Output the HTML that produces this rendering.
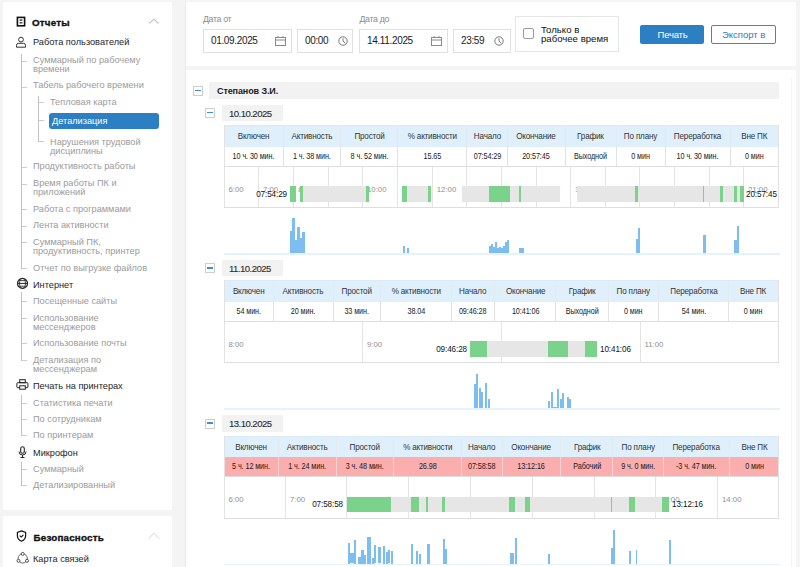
<!DOCTYPE html><html><head><meta charset="utf-8"><style>
*{margin:0;padding:0;box-sizing:border-box}
html,body{width:800px;height:567px;overflow:hidden;background:#f4f4f4;font-family:"Liberation Sans", sans-serif}
.a{position:absolute}
.t{position:absolute;white-space:nowrap;line-height:10px}
.sub{font-size:9.2px;color:#9b9b9b;letter-spacing:0px}
.grp{font-size:9.2px;color:#1e1e1e;letter-spacing:0px}
.ttl{font-size:9.8px;font-weight:bold;color:#111;letter-spacing:0.2px;-webkit-text-stroke:0.35px #111}
.vl{position:absolute;width:1px;background:#c2c2c2}
.hl{position:absolute;height:1px;background:#cdcdcd}
.panel{position:absolute;background:#fff}
</style></head><body>
<div class="panel" style="left:3px;top:2px;width:169px;height:508px"></div>
<div class="panel" style="left:3px;top:516px;width:169px;height:60px"></div>
<div class="t ttl" style="left:32px;top:17.729999999999997px;">Отчеты</div>
<svg class="a" style="left:147px;top:17px" width="14" height="8" viewBox="0 0 14 8"><path d="M2.2 6.5 L6.9 2.2 L11.6 6.5" fill="none" stroke="#c4c4c4" stroke-width="1.1"/></svg>
<svg class="a" style="left:16px;top:16px" width="10" height="11" viewBox="0 0 10 11"><rect x="1.4" y="1.4" width="7.2" height="8.4" fill="none" stroke="#111" stroke-width="1.6"/><rect x="3.6" y="3.5" width="2.8" height="1.2" fill="#111"/><rect x="3.6" y="6.2" width="2.8" height="1.2" fill="#111"/></svg>
<div class="t grp" style="left:33px;top:37.31px;">Работа пользователей</div>
<div class="t sub" style="left:33px;top:54.61px;">Суммарный по рабочему</div>
<div class="t sub" style="left:33px;top:63.81px;">времени</div>
<div class="t sub" style="left:33px;top:80.31px;">Табель рабочего времени</div>
<div class="t sub" style="left:50px;top:96.81px;">Тепловая карта</div>
<div class="t sub" style="left:50px;top:136.81px;">Нарушения трудовой</div>
<div class="t sub" style="left:50px;top:145.81px;">дисциплины</div>
<div class="t sub" style="left:33px;top:161.31px;">Продуктивность работы</div>
<div class="t sub" style="left:33px;top:178.31px;">Время работы ПК и</div>
<div class="t sub" style="left:33px;top:187.31px;">приложений</div>
<div class="t sub" style="left:33px;top:203.81px;">Работа с программами</div>
<div class="t sub" style="left:33px;top:219.81px;">Лента активности</div>
<div class="t sub" style="left:33px;top:236.81px;">Суммарный ПК,</div>
<div class="t sub" style="left:33px;top:245.81px;">продуктивность, принтер</div>
<div class="t sub" style="left:33px;top:262.81px;">Отчет по выгрузке файлов</div>
<div class="t grp" style="left:33px;top:279.81px;">Интернет</div>
<div class="t sub" style="left:33px;top:295.81px;">Посещенные сайты</div>
<div class="t sub" style="left:33px;top:312.81px;">Использование</div>
<div class="t sub" style="left:33px;top:321.81px;">мессенджеров</div>
<div class="t sub" style="left:33px;top:337.81px;">Использование почты</div>
<div class="t sub" style="left:33px;top:354.81px;">Детализация по</div>
<div class="t sub" style="left:33px;top:363.81px;">мессенджерам</div>
<div class="t grp" style="left:33px;top:381.31px;">Печать на принтерах</div>
<div class="t sub" style="left:33px;top:397.81px;">Статистика печати</div>
<div class="t sub" style="left:33px;top:414.31px;">По сотрудникам</div>
<div class="t sub" style="left:33px;top:430.31px;">По принтерам</div>
<div class="t grp" style="left:33px;top:447.81px;">Микрофон</div>
<div class="t sub" style="left:33px;top:464.31px;">Суммарный</div>
<div class="t sub" style="left:33px;top:479.81px;">Детализированный</div>
<div class="t grp" style="left:33px;top:553.81px;">Карта связей</div>
<div class="a" style="left:49px;top:113px;width:110px;height:16px;background:#2b7fc2;border-radius:3px"></div>
<div class="t sub" style="left:52px;top:115.81px;color:#fff">Детализация</div>
<div class="vl" style="left:21px;top:54px;height:215px"></div>
<div class="hl" style="left:22px;top:61px;width:5px"></div>
<div class="hl" style="left:22px;top:87px;width:5px"></div>
<div class="hl" style="left:22px;top:167px;width:5px"></div>
<div class="hl" style="left:22px;top:184px;width:5px"></div>
<div class="hl" style="left:22px;top:209px;width:5px"></div>
<div class="hl" style="left:22px;top:226px;width:5px"></div>
<div class="hl" style="left:22px;top:242px;width:5px"></div>
<div class="hl" style="left:22px;top:268px;width:5px"></div>
<div class="vl" style="left:38px;top:96px;height:46px"></div>
<div class="hl" style="left:39px;top:102px;width:5px"></div>
<div class="hl" style="left:39px;top:120px;width:5px"></div>
<div class="hl" style="left:39px;top:141px;width:5px"></div>
<div class="vl" style="left:21px;top:292px;height:69px"></div>
<div class="hl" style="left:22px;top:301px;width:5px"></div>
<div class="hl" style="left:22px;top:318px;width:5px"></div>
<div class="hl" style="left:22px;top:343px;width:5px"></div>
<div class="hl" style="left:22px;top:360px;width:5px"></div>
<div class="vl" style="left:21px;top:395px;height:41px"></div>
<div class="hl" style="left:22px;top:403px;width:5px"></div>
<div class="hl" style="left:22px;top:419px;width:5px"></div>
<div class="hl" style="left:22px;top:435px;width:5px"></div>
<div class="vl" style="left:21px;top:462px;height:24px"></div>
<div class="hl" style="left:22px;top:469px;width:5px"></div>
<div class="hl" style="left:22px;top:485px;width:5px"></div>
<svg class="a" style="left:15px;top:36px" width="12" height="12" viewBox="0 0 12 12"><circle cx="6" cy="3.6" r="2.4" fill="none" stroke="#333" stroke-width="1"/><path d="M1.5 11.2 V9.3 Q1.5 7.3 3.5 7.3 H8.5 Q10.5 7.3 10.5 9.3 V11.2 Z" fill="none" stroke="#333" stroke-width="1"/></svg>
<svg class="a" style="left:16px;top:277px" width="14" height="14" viewBox="0 0 14 14"><circle cx="6.5" cy="6.4" r="5" fill="none" stroke="#222" stroke-width="1.2"/><ellipse cx="6.5" cy="6.4" rx="3" ry="5" fill="none" stroke="#333" stroke-width="0.9"/><path d="M1.5 6.4 H11.5" stroke="#222" stroke-width="1"/><path d="M2.5 3.6 H10.5 M2.5 9.2 H10.5" stroke="#333" stroke-width="0.9"/></svg>
<svg class="a" style="left:16px;top:378px" width="13" height="13" viewBox="0 0 13 13"><rect x="3.7" y="1.7" width="5.6" height="3" fill="none" stroke="#222" stroke-width="1"/><rect x="0.9" y="4.7" width="11" height="5" rx="0.8" fill="none" stroke="#222" stroke-width="1"/><rect x="3.7" y="7.8" width="5.6" height="3.4" fill="#fff" stroke="#222" stroke-width="1"/></svg>
<svg class="a" style="left:18px;top:446px" width="9" height="12" viewBox="0 0 9 12"><rect x="2.7" y="0.8" width="3.6" height="6.4" rx="1.8" fill="none" stroke="#222" stroke-width="1.1"/><path d="M1 5.5 Q1 9 4.5 9 Q8 9 8 5.5 M4.5 9 V11.5 M2.5 11.5 H6.5" fill="none" stroke="#222" stroke-width="1"/></svg>
<div class="t ttl" style="left:33.5px;top:532.53px;">Безопасность</div>
<svg class="a" style="left:147px;top:531px" width="14" height="9" viewBox="0 0 14 9"><path d="M1.5 7.8 L6.9 2.2 L12.3 7.8" fill="none" stroke="#d4d4d4" stroke-width="1"/></svg>
<svg class="a" style="left:16px;top:530px" width="11" height="12" viewBox="0 0 11 12"><path d="M5.5 0.9 L9.6 2.4 V5.8 Q9.6 9.6 5.5 11.2 Q1.4 9.6 1.4 5.8 V2.4 Z" fill="none" stroke="#111" stroke-width="1.2"/><path d="M3.7 5.7 L5.2 7.1 L7.4 4.8" fill="none" stroke="#111" stroke-width="1.1"/></svg>
<svg class="a" style="left:16px;top:551px" width="14" height="14" viewBox="0 0 14 14"><circle cx="6.7" cy="7.4" r="4.6" fill="none" stroke="#555" stroke-width="0.9"/><circle cx="6.7" cy="2.9" r="1.5" fill="#fff" stroke="#444" stroke-width="0.9"/><circle cx="2.5" cy="9.8" r="1.5" fill="#fff" stroke="#444" stroke-width="0.9"/><circle cx="11" cy="9.8" r="1.5" fill="#fff" stroke="#444" stroke-width="0.9"/></svg>
<div class="a" style="left:185px;top:0px;width:1px;height:567px;background:#ebebeb"></div>
<div class="panel" style="left:186px;top:2px;width:610px;height:64px"></div>
<div class="panel" style="left:186px;top:70px;width:610px;height:500px"></div>
<div class="a" style="left:791px;top:78px;width:1px;height:500px;background:#f4f4f4"></div>
<div class="t" style="left:203px;top:14.95px;font-size:8.8px;line-height:8.8px;color:#8c8c8c;letter-spacing:-0.35px">Дата от</div>
<div class="t" style="left:359.5px;top:14.95px;font-size:8.8px;line-height:8.8px;color:#8c8c8c;letter-spacing:-0.35px">Дата до</div>
<div class="a" style="left:203px;top:29px;width:89px;height:24px;border:1px solid #e0e0e0;background:#fff"></div>
<div class="t" style="left:211px;top:35.53px;font-size:10px;line-height:10px;color:#1a1a1a;letter-spacing:-0.35px">01.09.2025</div>
<svg class="a" style="left:275px;top:36px" width="11" height="10" viewBox="0 0 11 10"><rect x="0.5" y="1.5" width="10" height="8" fill="none" stroke="#8a8a8a" stroke-width="1"/><path d="M0.5 4 H10.5 M3 0 V2 M8 0 V2" stroke="#8a8a8a" stroke-width="1"/></svg>
<div class="a" style="left:297px;top:29px;width:56px;height:24px;border:1px solid #e0e0e0;background:#fff"></div>
<div class="t" style="left:305px;top:35.53px;font-size:10px;line-height:10px;color:#1a1a1a;letter-spacing:-0.35px">00:00</div>
<svg class="a" style="left:337.8px;top:36px" width="10" height="10" viewBox="0 0 10 10"><circle cx="5" cy="5" r="4.2" fill="none" stroke="#7a7a7a" stroke-width="1"/><path d="M5 2.3 V5 L7 7" fill="none" stroke="#7a7a7a" stroke-width="1"/></svg>
<div class="a" style="left:359px;top:29px;width:89px;height:24px;border:1px solid #e0e0e0;background:#fff"></div>
<div class="t" style="left:367px;top:35.53px;font-size:10px;line-height:10px;color:#1a1a1a;letter-spacing:-0.35px">14.11.2025</div>
<svg class="a" style="left:431px;top:36px" width="11" height="10" viewBox="0 0 11 10"><rect x="0.5" y="1.5" width="10" height="8" fill="none" stroke="#8a8a8a" stroke-width="1"/><path d="M0.5 4 H10.5 M3 0 V2 M8 0 V2" stroke="#8a8a8a" stroke-width="1"/></svg>
<div class="a" style="left:453px;top:29px;width:58px;height:24px;border:1px solid #e0e0e0;background:#fff"></div>
<div class="t" style="left:461px;top:35.53px;font-size:10px;line-height:10px;color:#1a1a1a;letter-spacing:-0.35px">23:59</div>
<svg class="a" style="left:493.8px;top:36px" width="10" height="10" viewBox="0 0 10 10"><circle cx="5" cy="5" r="4.2" fill="none" stroke="#7a7a7a" stroke-width="1"/><path d="M5 2.3 V5 L7 7" fill="none" stroke="#7a7a7a" stroke-width="1"/></svg>
<div class="a" style="left:515px;top:16px;width:104px;height:36px;border:1px solid #e6e6e6"></div>
<div class="a" style="left:523px;top:28px;width:11px;height:11px;border:1px solid #9a9a9a;border-radius:2px"></div>
<div class="t" style="left:541px;top:25.07px;font-size:9.6px;line-height:9.6px;color:#111;letter-spacing:0px">Только в</div>
<div class="t" style="left:541px;top:34.17px;font-size:9.6px;line-height:9.6px;color:#111;letter-spacing:0px">рабочее время</div>
<div class="a" style="left:640px;top:25px;width:64px;height:18.5px;background:#2c7fc2;border-radius:2px"></div>
<div class="t" style="left:657.5px;top:29.76px;font-size:9.5px;line-height:9.5px;color:#fff;letter-spacing:-0.2px">Печать</div>
<div class="a" style="left:711px;top:25px;width:65px;height:18.5px;border:1px solid #3b87c7;border-radius:2px;background:#fff"></div>
<div class="t" style="left:722px;top:29.76px;font-size:9.5px;line-height:9.5px;color:#3478bd;letter-spacing:0px">Экспорт в</div>
<div class="a" style="left:193px;top:86px;width:10px;height:10px;border:1px solid #cdcdcd;background:#fff"></div>
<div class="a" style="left:195px;top:89.7px;width:5.5px;height:1.8px;background:#3f8fd2"></div>
<div class="a" style="left:209px;top:82px;width:570px;height:17px;background:#f2f2f2"></div>
<div class="t" style="left:217px;top:87.38px;font-size:9px;line-height:9px;color:#1a1a1a;font-weight:bold;letter-spacing:-0.1px">Степанов З.И.</div>
<div class="a" style="left:205px;top:108px;width:10px;height:10px;border:1px solid #cdcdcd;background:#fff"></div>
<div class="a" style="left:207px;top:111.7px;width:5.5px;height:1.8px;background:#3f8fd2"></div>
<div class="a" style="left:222px;top:104.5px;width:61px;height:16.5px;background:#f2f2f2"></div>
<div class="t" style="left:229px;top:108.77px;font-size:9.6px;line-height:9.6px;color:#2a2a2a;letter-spacing:-0.55px;-webkit-text-stroke:0.1px #2a2a2a">10.10.2025</div>
<div class="a" style="left:224px;top:125px;width:554.5px;height:21.5px;background:#dff0fc;border-top:1px solid #dbeaf5"></div>
<div class="a" style="left:224px;top:146.5px;width:554.5px;height:20px;background:#fff;border-bottom:1px solid #dedede"></div>
<div class="a" style="left:224px;top:125px;width:1px;height:82.0px;background:#e2e2e2"></div>
<div class="a" style="left:777.5px;top:125px;width:1px;height:82.0px;background:#e2e2e2"></div>
<div class="a" style="left:282.5px;top:125px;width:1px;height:21.5px;background:#e4ebf0"></div>
<div class="a" style="left:282.5px;top:146.5px;width:1px;height:19px;background:#e2e2e2"></div>
<div class="a" style="left:340.25px;top:125px;width:1px;height:21.5px;background:#e4ebf0"></div>
<div class="a" style="left:340.25px;top:146.5px;width:1px;height:19px;background:#e2e2e2"></div>
<div class="a" style="left:397.3px;top:125px;width:1px;height:21.5px;background:#e4ebf0"></div>
<div class="a" style="left:397.3px;top:146.5px;width:1px;height:19px;background:#e2e2e2"></div>
<div class="a" style="left:466.0px;top:125px;width:1px;height:21.5px;background:#e4ebf0"></div>
<div class="a" style="left:466.0px;top:146.5px;width:1px;height:19px;background:#e2e2e2"></div>
<div class="a" style="left:506.9px;top:125px;width:1px;height:21.5px;background:#e4ebf0"></div>
<div class="a" style="left:506.9px;top:146.5px;width:1px;height:19px;background:#e2e2e2"></div>
<div class="a" style="left:564.7px;top:125px;width:1px;height:21.5px;background:#e4ebf0"></div>
<div class="a" style="left:564.7px;top:146.5px;width:1px;height:19px;background:#e2e2e2"></div>
<div class="a" style="left:615.5px;top:125px;width:1px;height:21.5px;background:#e4ebf0"></div>
<div class="a" style="left:615.5px;top:146.5px;width:1px;height:19px;background:#e2e2e2"></div>
<div class="a" style="left:664.5px;top:125px;width:1px;height:21.5px;background:#e4ebf0"></div>
<div class="a" style="left:664.5px;top:146.5px;width:1px;height:19px;background:#e2e2e2"></div>
<div class="a" style="left:729.5px;top:125px;width:1px;height:21.5px;background:#e4ebf0"></div>
<div class="a" style="left:729.5px;top:146.5px;width:1px;height:19px;background:#e2e2e2"></div>
<div class="t" style="left:224px;width:59px;text-align:center;top:132.1px;font-size:9px;line-height:9px;color:#333;letter-spacing:-0.2px;transform:scaleX(0.9)">Включен</div>
<div class="t" style="left:224px;width:59px;text-align:center;top:151.7px;font-size:8.6px;line-height:9px;color:#1a1a1a;letter-spacing:-0.1px;transform:scaleX(0.84)">10 ч. 30 мин.</div>
<div class="t" style="left:283px;width:57.75px;text-align:center;top:132.1px;font-size:9px;line-height:9px;color:#333;letter-spacing:-0.2px;transform:scaleX(0.9)">Активность</div>
<div class="t" style="left:283px;width:57.75px;text-align:center;top:151.7px;font-size:8.6px;line-height:9px;color:#1a1a1a;letter-spacing:-0.1px;transform:scaleX(0.84)">1 ч. 38 мин.</div>
<div class="t" style="left:340.75px;width:57.05000000000001px;text-align:center;top:132.1px;font-size:9px;line-height:9px;color:#333;letter-spacing:-0.2px;transform:scaleX(0.9)">Простой</div>
<div class="t" style="left:340.75px;width:57.05000000000001px;text-align:center;top:151.7px;font-size:8.6px;line-height:9px;color:#1a1a1a;letter-spacing:-0.1px;transform:scaleX(0.84)">8 ч. 52 мин.</div>
<div class="t" style="left:397.8px;width:68.69999999999999px;text-align:center;top:132.1px;font-size:9px;line-height:9px;color:#333;letter-spacing:-0.2px;transform:scaleX(0.9)">% активности</div>
<div class="t" style="left:397.8px;width:68.69999999999999px;text-align:center;top:151.7px;font-size:8.6px;line-height:9px;color:#1a1a1a;letter-spacing:-0.1px;transform:scaleX(0.84)">15.65</div>
<div class="t" style="left:466.5px;width:40.89999999999998px;text-align:center;top:132.1px;font-size:9px;line-height:9px;color:#333;letter-spacing:-0.2px;transform:scaleX(0.9)">Начало</div>
<div class="t" style="left:466.5px;width:40.89999999999998px;text-align:center;top:151.7px;font-size:8.6px;line-height:9px;color:#1a1a1a;letter-spacing:-0.1px;transform:scaleX(0.84)">07:54:29</div>
<div class="t" style="left:507.4px;width:57.80000000000007px;text-align:center;top:132.1px;font-size:9px;line-height:9px;color:#333;letter-spacing:-0.2px;transform:scaleX(0.9)">Окончание</div>
<div class="t" style="left:507.4px;width:57.80000000000007px;text-align:center;top:151.7px;font-size:8.6px;line-height:9px;color:#1a1a1a;letter-spacing:-0.1px;transform:scaleX(0.84)">20:57:45</div>
<div class="t" style="left:565.2px;width:50.799999999999955px;text-align:center;top:132.1px;font-size:9px;line-height:9px;color:#333;letter-spacing:-0.2px;transform:scaleX(0.9)">График</div>
<div class="t" style="left:565.2px;width:50.799999999999955px;text-align:center;top:151.7px;font-size:8.6px;line-height:9px;color:#1a1a1a;letter-spacing:-0.1px;transform:scaleX(0.84)">Выходной</div>
<div class="t" style="left:616px;width:49px;text-align:center;top:132.1px;font-size:9px;line-height:9px;color:#333;letter-spacing:-0.2px;transform:scaleX(0.9)">По плану</div>
<div class="t" style="left:616px;width:49px;text-align:center;top:151.7px;font-size:8.6px;line-height:9px;color:#1a1a1a;letter-spacing:-0.1px;transform:scaleX(0.84)">0 мин</div>
<div class="t" style="left:665px;width:65px;text-align:center;top:132.1px;font-size:9px;line-height:9px;color:#333;letter-spacing:-0.2px;transform:scaleX(0.9)">Переработка</div>
<div class="t" style="left:665px;width:65px;text-align:center;top:151.7px;font-size:8.6px;line-height:9px;color:#1a1a1a;letter-spacing:-0.1px;transform:scaleX(0.84)">10 ч. 30 мин.</div>
<div class="t" style="left:730px;width:48.5px;text-align:center;top:132.1px;font-size:9px;line-height:9px;color:#333;letter-spacing:-0.2px;transform:scaleX(0.9)">Вне ПК</div>
<div class="t" style="left:730px;width:48.5px;text-align:center;top:151.7px;font-size:8.6px;line-height:9px;color:#1a1a1a;letter-spacing:-0.1px;transform:scaleX(0.84)">0 мин</div>
<div class="a" style="left:224px;top:207.0px;width:554.5px;height:1px;background:#dedede"></div>
<div class="a" style="left:258.00px;top:166.5px;width:1px;height:40.5px;background:#e4e4e4"></div>
<div class="a" style="left:293.25px;top:166.5px;width:1px;height:40.5px;background:#e4e4e4"></div>
<div class="a" style="left:328.00px;top:166.5px;width:1px;height:40.5px;background:#e4e4e4"></div>
<div class="a" style="left:362.00px;top:166.5px;width:1px;height:40.5px;background:#e4e4e4"></div>
<div class="a" style="left:396.75px;top:166.5px;width:1px;height:40.5px;background:#e4e4e4"></div>
<div class="a" style="left:431.75px;top:166.5px;width:1px;height:40.5px;background:#e4e4e4"></div>
<div class="a" style="left:465.75px;top:166.5px;width:1px;height:40.5px;background:#e4e4e4"></div>
<div class="a" style="left:501.00px;top:166.5px;width:1px;height:40.5px;background:#e4e4e4"></div>
<div class="a" style="left:535.50px;top:166.5px;width:1px;height:40.5px;background:#e4e4e4"></div>
<div class="a" style="left:569.90px;top:166.5px;width:1px;height:40.5px;background:#e4e4e4"></div>
<div class="a" style="left:604.90px;top:166.5px;width:1px;height:40.5px;background:#e4e4e4"></div>
<div class="a" style="left:638.90px;top:166.5px;width:1px;height:40.5px;background:#e4e4e4"></div>
<div class="a" style="left:674.10px;top:166.5px;width:1px;height:40.5px;background:#e4e4e4"></div>
<div class="a" style="left:708.90px;top:166.5px;width:1px;height:40.5px;background:#e4e4e4"></div>
<div class="a" style="left:743.00px;top:166.5px;width:1px;height:40.5px;background:#e4e4e4"></div>
<div class="t" style="left:228.50px;top:185.5px;font-size:7.8px;line-height:7px;color:#8f8f8f">6:00</div>
<div class="t" style="left:263.00px;top:185.5px;font-size:7.8px;line-height:7px;color:#8f8f8f">7:00</div>
<div class="t" style="left:298.25px;top:185.5px;font-size:7.8px;line-height:7px;color:#8f8f8f">8:00</div>
<div class="t" style="left:333.00px;top:185.5px;font-size:7.8px;line-height:7px;color:#8f8f8f">9:00</div>
<div class="t" style="left:367.00px;top:185.5px;font-size:7.8px;line-height:7px;color:#8f8f8f">10:00</div>
<div class="t" style="left:401.75px;top:185.5px;font-size:7.8px;line-height:7px;color:#8f8f8f">11:00</div>
<div class="t" style="left:436.75px;top:185.5px;font-size:7.8px;line-height:7px;color:#8f8f8f">12:00</div>
<div class="t" style="left:470.75px;top:185.5px;font-size:7.8px;line-height:7px;color:#8f8f8f">13:00</div>
<div class="t" style="left:506.00px;top:185.5px;font-size:7.8px;line-height:7px;color:#8f8f8f">14:00</div>
<div class="t" style="left:540.50px;top:185.5px;font-size:7.8px;line-height:7px;color:#8f8f8f">15:00</div>
<div class="t" style="left:574.90px;top:185.5px;font-size:7.8px;line-height:7px;color:#8f8f8f">16:00</div>
<div class="t" style="left:609.90px;top:185.5px;font-size:7.8px;line-height:7px;color:#8f8f8f">17:00</div>
<div class="t" style="left:643.90px;top:185.5px;font-size:7.8px;line-height:7px;color:#8f8f8f">18:00</div>
<div class="t" style="left:679.10px;top:185.5px;font-size:7.8px;line-height:7px;color:#8f8f8f">19:00</div>
<div class="t" style="left:713.90px;top:185.5px;font-size:7.8px;line-height:7px;color:#8f8f8f">20:00</div>
<div class="t" style="left:748.00px;top:185.5px;font-size:7.8px;line-height:7px;color:#8f8f8f">21:00</div>
<div class="a" style="left:302.75px;top:186.0px;width:63.25px;height:15.5px;background:#e6e6e6"></div>
<div class="a" style="left:407px;top:186.0px;width:21px;height:15.5px;background:#e6e6e6"></div>
<div class="a" style="left:462.1px;top:186.0px;width:27.299999999999955px;height:15.5px;background:#e6e6e6"></div>
<div class="a" style="left:509.75px;top:186.0px;width:50.0px;height:15.5px;background:#e6e6e6"></div>
<div class="a" style="left:577.25px;top:186.0px;width:166.25px;height:15.5px;background:#e6e6e6"></div>
<div class="a" style="left:290px;top:186.0px;width:6.25px;height:15.5px;background:#7bd38b"></div>
<div class="a" style="left:300.25px;top:186.0px;width:2.5px;height:15.5px;background:#7bd38b"></div>
<div class="a" style="left:366px;top:186.0px;width:3px;height:15.5px;background:#7bd38b"></div>
<div class="a" style="left:402px;top:186.0px;width:5px;height:15.5px;background:#7bd38b"></div>
<div class="a" style="left:428px;top:186.0px;width:3.3999999999999773px;height:15.5px;background:#7bd38b"></div>
<div class="a" style="left:489.4px;top:186.0px;width:20.350000000000023px;height:15.5px;background:#7bd38b"></div>
<div class="a" style="left:519.4px;top:186.0px;width:1.6000000000000227px;height:15.5px;background:#7bd38b"></div>
<div class="a" style="left:635px;top:186.0px;width:2.8999999999999773px;height:15.5px;background:#7bd38b"></div>
<div class="a" style="left:703.1px;top:186.0px;width:1.0px;height:15.5px;background:#7bd38b"></div>
<div class="a" style="left:720px;top:186.0px;width:3.1000000000000227px;height:15.5px;background:#7bd38b"></div>
<div class="a" style="left:733.75px;top:186.0px;width:3.1499999999999773px;height:15.5px;background:#7bd38b"></div>
<div class="a" style="left:740.25px;top:186.0px;width:3.25px;height:15.5px;background:#7bd38b"></div>
<div class="t" style="left:246.5px;width:40px;text-align:right;top:189.5px;font-size:9px;line-height:9px;color:#111;letter-spacing:-0.1px;transform:scaleX(0.9);transform-origin:100% 50%">07:54:29</div>
<div class="t" style="left:746px;top:189.5px;font-size:9px;line-height:9px;color:#111;letter-spacing:-0.1px;transform:scaleX(0.9);transform-origin:0 50%">20:57:45</div>
<div class="a" style="left:224px;top:253.0px;width:555.5px;height:1.5px;background:#e6f2fc"></div>
<div class="a" style="left:290px;top:231px;width:2.00px;height:22.0px;background:#7dbdf0"></div>
<div class="a" style="left:292px;top:218.2px;width:2.50px;height:34.80000000000001px;background:#7dbdf0"></div>
<div class="a" style="left:295px;top:240px;width:2.00px;height:13.0px;background:#7dbdf0"></div>
<div class="a" style="left:297px;top:226.8px;width:2.50px;height:26.19999999999999px;background:#7dbdf0"></div>
<div class="a" style="left:300px;top:238px;width:2.00px;height:15.0px;background:#7dbdf0"></div>
<div class="a" style="left:302px;top:232px;width:2.50px;height:21.0px;background:#7dbdf0"></div>
<div class="a" style="left:402.8px;top:246.4px;width:2.40px;height:6.599999999999994px;background:#7dbdf0"></div>
<div class="a" style="left:407px;top:248px;width:2.00px;height:5.0px;background:#7dbdf0"></div>
<div class="a" style="left:489px;top:245.75px;width:2.00px;height:7.25px;background:#7dbdf0"></div>
<div class="a" style="left:491px;top:243.5px;width:2.00px;height:9.5px;background:#7dbdf0"></div>
<div class="a" style="left:493px;top:246.6px;width:2.00px;height:6.400000000000006px;background:#7dbdf0"></div>
<div class="a" style="left:495px;top:241.9px;width:2.00px;height:11.099999999999994px;background:#7dbdf0"></div>
<div class="a" style="left:497px;top:248px;width:1.60px;height:5.0px;background:#7dbdf0"></div>
<div class="a" style="left:498.5px;top:246.85px;width:2.00px;height:6.150000000000006px;background:#7dbdf0"></div>
<div class="a" style="left:501px;top:248.2px;width:2.00px;height:4.800000000000011px;background:#7dbdf0"></div>
<div class="a" style="left:503px;top:246px;width:2.00px;height:7.0px;background:#7dbdf0"></div>
<div class="a" style="left:505px;top:241.9px;width:1.60px;height:11.099999999999994px;background:#7dbdf0"></div>
<div class="a" style="left:506.5px;top:240.25px;width:2.50px;height:12.75px;background:#7dbdf0"></div>
<div class="a" style="left:519px;top:248px;width:4.50px;height:5.0px;background:#7dbdf0"></div>
<div class="a" style="left:636px;top:239px;width:2.00px;height:14.0px;background:#7dbdf0"></div>
<div class="a" style="left:638px;top:227.6px;width:2.00px;height:25.400000000000006px;background:#7dbdf0"></div>
<div class="a" style="left:703px;top:235.4px;width:2.50px;height:17.599999999999994px;background:#7dbdf0"></div>
<div class="a" style="left:734px;top:240px;width:2.50px;height:13.0px;background:#7dbdf0"></div>
<div class="a" style="left:737px;top:226px;width:2.00px;height:27.0px;background:#7dbdf0"></div>
<div class="a" style="left:205px;top:263.25px;width:10px;height:10px;border:1px solid #cdcdcd;background:#fff"></div>
<div class="a" style="left:207px;top:266.95px;width:5.5px;height:1.8px;background:#3f8fd2"></div>
<div class="a" style="left:222px;top:259.75px;width:61px;height:16.5px;background:#f2f2f2"></div>
<div class="t" style="left:229px;top:264.02px;font-size:9.6px;line-height:9.6px;color:#2a2a2a;letter-spacing:-0.55px;-webkit-text-stroke:0.1px #2a2a2a">11.10.2025</div>
<div class="a" style="left:224px;top:280.25px;width:554.5px;height:21.5px;background:#dff0fc;border-top:1px solid #dbeaf5"></div>
<div class="a" style="left:224px;top:301.75px;width:554.5px;height:20px;background:#fff;border-bottom:1px solid #dedede"></div>
<div class="a" style="left:224px;top:280.25px;width:1px;height:82.0px;background:#e2e2e2"></div>
<div class="a" style="left:777.5px;top:280.25px;width:1px;height:82.0px;background:#e2e2e2"></div>
<div class="a" style="left:272.9px;top:280.25px;width:1px;height:21.5px;background:#e4ebf0"></div>
<div class="a" style="left:272.9px;top:301.75px;width:1px;height:19px;background:#e2e2e2"></div>
<div class="a" style="left:332.9px;top:280.25px;width:1px;height:21.5px;background:#e4ebf0"></div>
<div class="a" style="left:332.9px;top:301.75px;width:1px;height:19px;background:#e2e2e2"></div>
<div class="a" style="left:380.2px;top:280.25px;width:1px;height:21.5px;background:#e4ebf0"></div>
<div class="a" style="left:380.2px;top:301.75px;width:1px;height:19px;background:#e2e2e2"></div>
<div class="a" style="left:450.8px;top:280.25px;width:1px;height:21.5px;background:#e4ebf0"></div>
<div class="a" style="left:450.8px;top:301.75px;width:1px;height:19px;background:#e2e2e2"></div>
<div class="a" style="left:494.1px;top:280.25px;width:1px;height:21.5px;background:#e4ebf0"></div>
<div class="a" style="left:494.1px;top:301.75px;width:1px;height:19px;background:#e2e2e2"></div>
<div class="a" style="left:555.4px;top:280.25px;width:1px;height:21.5px;background:#e4ebf0"></div>
<div class="a" style="left:555.4px;top:301.75px;width:1px;height:19px;background:#e2e2e2"></div>
<div class="a" style="left:607.7px;top:280.25px;width:1px;height:21.5px;background:#e4ebf0"></div>
<div class="a" style="left:607.7px;top:301.75px;width:1px;height:19px;background:#e2e2e2"></div>
<div class="a" style="left:658.1px;top:280.25px;width:1px;height:21.5px;background:#e4ebf0"></div>
<div class="a" style="left:658.1px;top:301.75px;width:1px;height:19px;background:#e2e2e2"></div>
<div class="a" style="left:727.9px;top:280.25px;width:1px;height:21.5px;background:#e4ebf0"></div>
<div class="a" style="left:727.9px;top:301.75px;width:1px;height:19px;background:#e2e2e2"></div>
<div class="t" style="left:224px;width:49.39999999999998px;text-align:center;top:287.35px;font-size:9px;line-height:9px;color:#333;letter-spacing:-0.2px;transform:scaleX(0.9)">Включен</div>
<div class="t" style="left:224px;width:49.39999999999998px;text-align:center;top:306.95px;font-size:8.6px;line-height:9px;color:#1a1a1a;letter-spacing:-0.1px;transform:scaleX(0.84)">54 мин.</div>
<div class="t" style="left:273.4px;width:60.0px;text-align:center;top:287.35px;font-size:9px;line-height:9px;color:#333;letter-spacing:-0.2px;transform:scaleX(0.9)">Активность</div>
<div class="t" style="left:273.4px;width:60.0px;text-align:center;top:306.95px;font-size:8.6px;line-height:9px;color:#1a1a1a;letter-spacing:-0.1px;transform:scaleX(0.84)">20 мин.</div>
<div class="t" style="left:333.4px;width:47.30000000000001px;text-align:center;top:287.35px;font-size:9px;line-height:9px;color:#333;letter-spacing:-0.2px;transform:scaleX(0.9)">Простой</div>
<div class="t" style="left:333.4px;width:47.30000000000001px;text-align:center;top:306.95px;font-size:8.6px;line-height:9px;color:#1a1a1a;letter-spacing:-0.1px;transform:scaleX(0.84)">33 мин.</div>
<div class="t" style="left:380.7px;width:70.60000000000002px;text-align:center;top:287.35px;font-size:9px;line-height:9px;color:#333;letter-spacing:-0.2px;transform:scaleX(0.9)">% активности</div>
<div class="t" style="left:380.7px;width:70.60000000000002px;text-align:center;top:306.95px;font-size:8.6px;line-height:9px;color:#1a1a1a;letter-spacing:-0.1px;transform:scaleX(0.84)">38.04</div>
<div class="t" style="left:451.3px;width:43.30000000000001px;text-align:center;top:287.35px;font-size:9px;line-height:9px;color:#333;letter-spacing:-0.2px;transform:scaleX(0.9)">Начало</div>
<div class="t" style="left:451.3px;width:43.30000000000001px;text-align:center;top:306.95px;font-size:8.6px;line-height:9px;color:#1a1a1a;letter-spacing:-0.1px;transform:scaleX(0.84)">09:46:28</div>
<div class="t" style="left:494.6px;width:61.299999999999955px;text-align:center;top:287.35px;font-size:9px;line-height:9px;color:#333;letter-spacing:-0.2px;transform:scaleX(0.9)">Окончание</div>
<div class="t" style="left:494.6px;width:61.299999999999955px;text-align:center;top:306.95px;font-size:8.6px;line-height:9px;color:#1a1a1a;letter-spacing:-0.1px;transform:scaleX(0.84)">10:41:06</div>
<div class="t" style="left:555.9px;width:52.30000000000007px;text-align:center;top:287.35px;font-size:9px;line-height:9px;color:#333;letter-spacing:-0.2px;transform:scaleX(0.9)">График</div>
<div class="t" style="left:555.9px;width:52.30000000000007px;text-align:center;top:306.95px;font-size:8.6px;line-height:9px;color:#1a1a1a;letter-spacing:-0.1px;transform:scaleX(0.84)">Выходной</div>
<div class="t" style="left:608.2px;width:50.39999999999998px;text-align:center;top:287.35px;font-size:9px;line-height:9px;color:#333;letter-spacing:-0.2px;transform:scaleX(0.9)">По плану</div>
<div class="t" style="left:608.2px;width:50.39999999999998px;text-align:center;top:306.95px;font-size:8.6px;line-height:9px;color:#1a1a1a;letter-spacing:-0.1px;transform:scaleX(0.84)">0 мин</div>
<div class="t" style="left:658.6px;width:69.79999999999995px;text-align:center;top:287.35px;font-size:9px;line-height:9px;color:#333;letter-spacing:-0.2px;transform:scaleX(0.9)">Переработка</div>
<div class="t" style="left:658.6px;width:69.79999999999995px;text-align:center;top:306.95px;font-size:8.6px;line-height:9px;color:#1a1a1a;letter-spacing:-0.1px;transform:scaleX(0.84)">54 мин.</div>
<div class="t" style="left:728.4px;width:50.10000000000002px;text-align:center;top:287.35px;font-size:9px;line-height:9px;color:#333;letter-spacing:-0.2px;transform:scaleX(0.9)">Вне ПК</div>
<div class="t" style="left:728.4px;width:50.10000000000002px;text-align:center;top:306.95px;font-size:8.6px;line-height:9px;color:#1a1a1a;letter-spacing:-0.1px;transform:scaleX(0.84)">0 мин</div>
<div class="a" style="left:224px;top:362.25px;width:554.5px;height:1px;background:#dedede"></div>
<div class="a" style="left:362.00px;top:321.75px;width:1px;height:40.5px;background:#e4e4e4"></div>
<div class="a" style="left:501.10px;top:321.75px;width:1px;height:40.5px;background:#e4e4e4"></div>
<div class="a" style="left:639.50px;top:321.75px;width:1px;height:40.5px;background:#e4e4e4"></div>
<div class="t" style="left:228.50px;top:340.75px;font-size:7.8px;line-height:7px;color:#8f8f8f">8:00</div>
<div class="t" style="left:367.00px;top:340.75px;font-size:7.8px;line-height:7px;color:#8f8f8f">9:00</div>
<div class="t" style="left:506.10px;top:340.75px;font-size:7.8px;line-height:7px;color:#8f8f8f">10:00</div>
<div class="t" style="left:644.50px;top:340.75px;font-size:7.8px;line-height:7px;color:#8f8f8f">11:00</div>
<div class="a" style="left:486.6px;top:341.25px;width:61.799999999999955px;height:15.5px;background:#e6e6e6"></div>
<div class="a" style="left:567.6px;top:341.25px;width:17.399999999999977px;height:15.5px;background:#e6e6e6"></div>
<div class="a" style="left:470px;top:341.25px;width:16.600000000000023px;height:15.5px;background:#7bd38b"></div>
<div class="a" style="left:548.4px;top:341.25px;width:19.200000000000045px;height:15.5px;background:#7bd38b"></div>
<div class="a" style="left:585px;top:341.25px;width:12px;height:15.5px;background:#7bd38b"></div>
<div class="t" style="left:427px;width:40px;text-align:right;top:344.75px;font-size:9px;line-height:9px;color:#111;letter-spacing:-0.1px;transform:scaleX(0.9);transform-origin:100% 50%">09:46:28</div>
<div class="t" style="left:600px;top:344.75px;font-size:9px;line-height:9px;color:#111;letter-spacing:-0.1px;transform:scaleX(0.9);transform-origin:0 50%">10:41:06</div>
<div class="a" style="left:224px;top:408.25px;width:555.5px;height:1.5px;background:#e6f2fc"></div>
<div class="a" style="left:474px;top:384.2px;width:2.00px;height:24.05000000000001px;background:#7dbdf0"></div>
<div class="a" style="left:476px;top:374.3px;width:2.00px;height:33.94999999999999px;background:#7dbdf0"></div>
<div class="a" style="left:478.5px;top:388.2px;width:2.00px;height:20.05000000000001px;background:#7dbdf0"></div>
<div class="a" style="left:480.5px;top:391.7px;width:2.00px;height:16.55000000000001px;background:#7dbdf0"></div>
<div class="a" style="left:485px;top:383.3px;width:2.00px;height:24.94999999999999px;background:#7dbdf0"></div>
<div class="a" style="left:487.5px;top:399.2px;width:2.00px;height:9.050000000000011px;background:#7dbdf0"></div>
<div class="a" style="left:548px;top:400.7px;width:2.00px;height:7.550000000000011px;background:#7dbdf0"></div>
<div class="a" style="left:550.5px;top:391.7px;width:2.00px;height:16.55000000000001px;background:#7dbdf0"></div>
<div class="a" style="left:552.5px;top:406.5px;width:4.00px;height:1.75px;background:#7dbdf0"></div>
<div class="a" style="left:557px;top:389px;width:2.00px;height:19.25px;background:#7dbdf0"></div>
<div class="a" style="left:559.5px;top:399.2px;width:2.00px;height:9.050000000000011px;background:#7dbdf0"></div>
<div class="a" style="left:562px;top:393.2px;width:2.00px;height:15.050000000000011px;background:#7dbdf0"></div>
<div class="a" style="left:566.5px;top:397.25px;width:2.00px;height:11.0px;background:#7dbdf0"></div>
<div class="a" style="left:569px;top:398.75px;width:2.00px;height:9.5px;background:#7dbdf0"></div>
<div class="a" style="left:205px;top:418.5px;width:10px;height:10px;border:1px solid #cdcdcd;background:#fff"></div>
<div class="a" style="left:207px;top:422.2px;width:5.5px;height:1.8px;background:#3f8fd2"></div>
<div class="a" style="left:222px;top:415.0px;width:61px;height:16.5px;background:#f2f2f2"></div>
<div class="t" style="left:229px;top:419.27px;font-size:9.6px;line-height:9.6px;color:#2a2a2a;letter-spacing:-0.55px;-webkit-text-stroke:0.1px #2a2a2a">13.10.2025</div>
<div class="a" style="left:224px;top:435.5px;width:554.5px;height:21.5px;background:#dff0fc;border-top:1px solid #dbeaf5"></div>
<div class="a" style="left:224px;top:457.0px;width:554.5px;height:20px;background:#fcaeae;border-bottom:1px solid #dedede"></div>
<div class="a" style="left:224px;top:435.5px;width:1px;height:82.0px;background:#e2e2e2"></div>
<div class="a" style="left:777.5px;top:435.5px;width:1px;height:82.0px;background:#e2e2e2"></div>
<div class="a" style="left:277.5px;top:435.5px;width:1px;height:21.5px;background:#e4ebf0"></div>
<div class="a" style="left:277.5px;top:457.0px;width:1px;height:19px;background:#f2d6d6"></div>
<div class="a" style="left:335.7px;top:435.5px;width:1px;height:21.5px;background:#e4ebf0"></div>
<div class="a" style="left:335.7px;top:457.0px;width:1px;height:19px;background:#f2d6d6"></div>
<div class="a" style="left:393.0px;top:435.5px;width:1px;height:21.5px;background:#e4ebf0"></div>
<div class="a" style="left:393.0px;top:457.0px;width:1px;height:19px;background:#f2d6d6"></div>
<div class="a" style="left:460.5px;top:435.5px;width:1px;height:21.5px;background:#e4ebf0"></div>
<div class="a" style="left:460.5px;top:457.0px;width:1px;height:19px;background:#f2d6d6"></div>
<div class="a" style="left:501.9px;top:435.5px;width:1px;height:21.5px;background:#e4ebf0"></div>
<div class="a" style="left:501.9px;top:457.0px;width:1px;height:19px;background:#f2d6d6"></div>
<div class="a" style="left:560.0px;top:435.5px;width:1px;height:21.5px;background:#e4ebf0"></div>
<div class="a" style="left:560.0px;top:457.0px;width:1px;height:19px;background:#f2d6d6"></div>
<div class="a" style="left:612.4px;top:435.5px;width:1px;height:21.5px;background:#e4ebf0"></div>
<div class="a" style="left:612.4px;top:457.0px;width:1px;height:19px;background:#f2d6d6"></div>
<div class="a" style="left:662.8px;top:435.5px;width:1px;height:21.5px;background:#e4ebf0"></div>
<div class="a" style="left:662.8px;top:457.0px;width:1px;height:19px;background:#f2d6d6"></div>
<div class="a" style="left:729.0px;top:435.5px;width:1px;height:21.5px;background:#e4ebf0"></div>
<div class="a" style="left:729.0px;top:457.0px;width:1px;height:19px;background:#f2d6d6"></div>
<div class="t" style="left:224px;width:54px;text-align:center;top:442.6px;font-size:9px;line-height:9px;color:#333;letter-spacing:-0.2px;transform:scaleX(0.9)">Включен</div>
<div class="t" style="left:224px;width:54px;text-align:center;top:462.2px;font-size:8.6px;line-height:9px;color:#1a1a1a;letter-spacing:-0.1px;transform:scaleX(0.84)">5 ч. 12 мин.</div>
<div class="t" style="left:278px;width:58.19999999999999px;text-align:center;top:442.6px;font-size:9px;line-height:9px;color:#333;letter-spacing:-0.2px;transform:scaleX(0.9)">Активность</div>
<div class="t" style="left:278px;width:58.19999999999999px;text-align:center;top:462.2px;font-size:8.6px;line-height:9px;color:#1a1a1a;letter-spacing:-0.1px;transform:scaleX(0.84)">1 ч. 24 мин.</div>
<div class="t" style="left:336.2px;width:57.30000000000001px;text-align:center;top:442.6px;font-size:9px;line-height:9px;color:#333;letter-spacing:-0.2px;transform:scaleX(0.9)">Простой</div>
<div class="t" style="left:336.2px;width:57.30000000000001px;text-align:center;top:462.2px;font-size:8.6px;line-height:9px;color:#1a1a1a;letter-spacing:-0.1px;transform:scaleX(0.84)">3 ч. 48 мин.</div>
<div class="t" style="left:393.5px;width:67.5px;text-align:center;top:442.6px;font-size:9px;line-height:9px;color:#333;letter-spacing:-0.2px;transform:scaleX(0.9)">% активности</div>
<div class="t" style="left:393.5px;width:67.5px;text-align:center;top:462.2px;font-size:8.6px;line-height:9px;color:#1a1a1a;letter-spacing:-0.1px;transform:scaleX(0.84)">26.98</div>
<div class="t" style="left:461px;width:41.39999999999998px;text-align:center;top:442.6px;font-size:9px;line-height:9px;color:#333;letter-spacing:-0.2px;transform:scaleX(0.9)">Начало</div>
<div class="t" style="left:461px;width:41.39999999999998px;text-align:center;top:462.2px;font-size:8.6px;line-height:9px;color:#1a1a1a;letter-spacing:-0.1px;transform:scaleX(0.84)">07:58:58</div>
<div class="t" style="left:502.4px;width:58.10000000000002px;text-align:center;top:442.6px;font-size:9px;line-height:9px;color:#333;letter-spacing:-0.2px;transform:scaleX(0.9)">Окончание</div>
<div class="t" style="left:502.4px;width:58.10000000000002px;text-align:center;top:462.2px;font-size:8.6px;line-height:9px;color:#1a1a1a;letter-spacing:-0.1px;transform:scaleX(0.84)">13:12:16</div>
<div class="t" style="left:560.5px;width:52.39999999999998px;text-align:center;top:442.6px;font-size:9px;line-height:9px;color:#333;letter-spacing:-0.2px;transform:scaleX(0.9)">График</div>
<div class="t" style="left:560.5px;width:52.39999999999998px;text-align:center;top:462.2px;font-size:8.6px;line-height:9px;color:#1a1a1a;letter-spacing:-0.1px;transform:scaleX(0.84)">Рабочий</div>
<div class="t" style="left:612.9px;width:50.39999999999998px;text-align:center;top:442.6px;font-size:9px;line-height:9px;color:#333;letter-spacing:-0.2px;transform:scaleX(0.9)">По плану</div>
<div class="t" style="left:612.9px;width:50.39999999999998px;text-align:center;top:462.2px;font-size:8.6px;line-height:9px;color:#1a1a1a;letter-spacing:-0.1px;transform:scaleX(0.84)">9 ч. 0 мин.</div>
<div class="t" style="left:663.3px;width:66.20000000000005px;text-align:center;top:442.6px;font-size:9px;line-height:9px;color:#333;letter-spacing:-0.2px;transform:scaleX(0.9)">Переработка</div>
<div class="t" style="left:663.3px;width:66.20000000000005px;text-align:center;top:462.2px;font-size:8.6px;line-height:9px;color:#1a1a1a;letter-spacing:-0.1px;transform:scaleX(0.84)">-3 ч. 47 мин.</div>
<div class="t" style="left:729.5px;width:49.0px;text-align:center;top:442.6px;font-size:9px;line-height:9px;color:#333;letter-spacing:-0.2px;transform:scaleX(0.9)">Вне ПК</div>
<div class="t" style="left:729.5px;width:49.0px;text-align:center;top:462.2px;font-size:8.6px;line-height:9px;color:#1a1a1a;letter-spacing:-0.1px;transform:scaleX(0.84)">0 мин</div>
<div class="a" style="left:224px;top:517.5px;width:554.5px;height:1px;background:#dedede"></div>
<div class="a" style="left:285.00px;top:477.0px;width:1px;height:40.5px;background:#e4e4e4"></div>
<div class="a" style="left:345.75px;top:477.0px;width:1px;height:40.5px;background:#e4e4e4"></div>
<div class="a" style="left:408.25px;top:477.0px;width:1px;height:40.5px;background:#e4e4e4"></div>
<div class="a" style="left:470.00px;top:477.0px;width:1px;height:40.5px;background:#e4e4e4"></div>
<div class="a" style="left:532.00px;top:477.0px;width:1px;height:40.5px;background:#e4e4e4"></div>
<div class="a" style="left:593.75px;top:477.0px;width:1px;height:40.5px;background:#e4e4e4"></div>
<div class="a" style="left:655.00px;top:477.0px;width:1px;height:40.5px;background:#e4e4e4"></div>
<div class="a" style="left:717.00px;top:477.0px;width:1px;height:40.5px;background:#e4e4e4"></div>
<div class="t" style="left:228.50px;top:496.0px;font-size:7.8px;line-height:7px;color:#8f8f8f">6:00</div>
<div class="t" style="left:290.00px;top:496.0px;font-size:7.8px;line-height:7px;color:#8f8f8f">7:00</div>
<div class="t" style="left:350.75px;top:496.0px;font-size:7.8px;line-height:7px;color:#8f8f8f">8:00</div>
<div class="t" style="left:413.25px;top:496.0px;font-size:7.8px;line-height:7px;color:#8f8f8f">9:00</div>
<div class="t" style="left:475.00px;top:496.0px;font-size:7.8px;line-height:7px;color:#8f8f8f">10:00</div>
<div class="t" style="left:537.00px;top:496.0px;font-size:7.8px;line-height:7px;color:#8f8f8f">11:00</div>
<div class="t" style="left:598.75px;top:496.0px;font-size:7.8px;line-height:7px;color:#8f8f8f">12:00</div>
<div class="t" style="left:660.00px;top:496.0px;font-size:7.8px;line-height:7px;color:#8f8f8f">13:00</div>
<div class="t" style="left:722.00px;top:496.0px;font-size:7.8px;line-height:7px;color:#8f8f8f">14:00</div>
<div class="a" style="left:391.25px;top:496.5px;width:277.5px;height:15.5px;background:#e6e6e6"></div>
<div class="a" style="left:346.75px;top:496.5px;width:44.5px;height:15.5px;background:#7bd38b"></div>
<div class="a" style="left:410.5px;top:496.5px;width:8.25px;height:15.5px;background:#7bd38b"></div>
<div class="a" style="left:425.75px;top:496.5px;width:1.75px;height:15.5px;background:#7bd38b"></div>
<div class="a" style="left:442px;top:496.5px;width:3px;height:15.5px;background:#7bd38b"></div>
<div class="a" style="left:509.25px;top:496.5px;width:5.75px;height:15.5px;background:#7bd38b"></div>
<div class="a" style="left:524.5px;top:496.5px;width:5.5px;height:15.5px;background:#7bd38b"></div>
<div class="a" style="left:610.5px;top:496.5px;width:1.5px;height:15.5px;background:#7bd38b"></div>
<div class="a" style="left:628.75px;top:496.5px;width:6.25px;height:15.5px;background:#7bd38b"></div>
<div class="a" style="left:661.75px;top:496.5px;width:7.0px;height:15.5px;background:#7bd38b"></div>
<div class="t" style="left:303px;width:40px;text-align:right;top:500.0px;font-size:9px;line-height:9px;color:#111;letter-spacing:-0.1px;transform:scaleX(0.9);transform-origin:100% 50%">07:58:58</div>
<div class="t" style="left:672px;top:500.0px;font-size:9px;line-height:9px;color:#111;letter-spacing:-0.1px;transform:scaleX(0.9);transform-origin:0 50%">13:12:16</div>
<div class="a" style="left:224px;top:563.5px;width:555.5px;height:1.5px;background:#e6f2fc"></div>
<div class="a" style="left:347.8px;top:543.25px;width:1.95px;height:20.25px;background:#7dbdf0"></div>
<div class="a" style="left:349.75px;top:552.7px;width:3.75px;height:10.799999999999955px;background:#7dbdf0"></div>
<div class="a" style="left:354px;top:540px;width:2.00px;height:23.5px;background:#7dbdf0"></div>
<div class="a" style="left:358px;top:556.75px;width:2.50px;height:6.75px;background:#7dbdf0"></div>
<div class="a" style="left:361px;top:550px;width:2.80px;height:13.5px;background:#7dbdf0"></div>
<div class="a" style="left:364.3px;top:554.5px;width:2.20px;height:9.0px;background:#7dbdf0"></div>
<div class="a" style="left:367px;top:537px;width:3.50px;height:26.5px;background:#7dbdf0"></div>
<div class="a" style="left:372px;top:558.25px;width:2.00px;height:5.25px;background:#7dbdf0"></div>
<div class="a" style="left:374px;top:545.2px;width:2.00px;height:18.299999999999955px;background:#7dbdf0"></div>
<div class="a" style="left:378px;top:547.4px;width:2.50px;height:16.100000000000023px;background:#7dbdf0"></div>
<div class="a" style="left:383px;top:546.25px;width:2.00px;height:17.25px;background:#7dbdf0"></div>
<div class="a" style="left:385.5px;top:552.25px;width:2.00px;height:11.25px;background:#7dbdf0"></div>
<div class="a" style="left:388px;top:549.7px;width:2.00px;height:13.799999999999955px;background:#7dbdf0"></div>
<div class="a" style="left:391px;top:550.75px;width:2.00px;height:12.75px;background:#7dbdf0"></div>
<div class="a" style="left:411px;top:544px;width:2.00px;height:19.5px;background:#7dbdf0"></div>
<div class="a" style="left:416px;top:550.75px;width:2.00px;height:12.75px;background:#7dbdf0"></div>
<div class="a" style="left:419px;top:554px;width:2.00px;height:9.5px;background:#7dbdf0"></div>
<div class="a" style="left:427px;top:544px;width:2.50px;height:19.5px;background:#7dbdf0"></div>
<div class="a" style="left:442.5px;top:539px;width:2.00px;height:24.5px;background:#7dbdf0"></div>
<div class="a" style="left:445px;top:548.5px;width:2.00px;height:15.0px;background:#7dbdf0"></div>
<div class="a" style="left:510px;top:553px;width:4.00px;height:10.5px;background:#7dbdf0"></div>
<div class="a" style="left:514.5px;top:537.5px;width:2.00px;height:26.0px;background:#7dbdf0"></div>
<div class="a" style="left:548px;top:554px;width:1.60px;height:9.5px;background:#7dbdf0"></div>
<div class="a" style="left:611px;top:547.5px;width:2.00px;height:16.0px;background:#7dbdf0"></div>
<div class="a" style="left:613px;top:529.5px;width:1.60px;height:34.0px;background:#7dbdf0"></div>
<div class="a" style="left:629.25px;top:550.75px;width:1.75px;height:12.75px;background:#7dbdf0"></div>
<div class="a" style="left:635.5px;top:550px;width:1.60px;height:13.5px;background:#7dbdf0"></div>
<div class="a" style="left:669.25px;top:540px;width:1.60px;height:23.5px;background:#7dbdf0"></div>
</body></html>
